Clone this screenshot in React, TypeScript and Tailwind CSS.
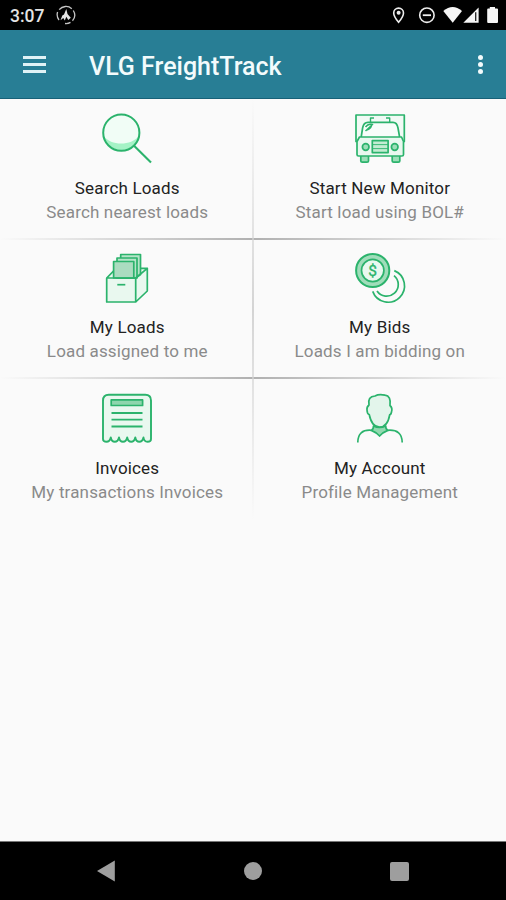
import type { ReactNode } from "react";

const GREEN = "#2bb36c";

function Icon({ children }: { children: ReactNode }) {
  return (
    <svg
      width="60"
      height="56"
      viewBox="0 0 60 56"
      fill="none"
      stroke={GREEN}
      strokeWidth="1.7"
      strokeLinejoin="round"
      className="shrink-0"
    >
      {children}
    </svg>
  );
}

const SearchIcon = () => (
  <Icon>
    <circle cx="24.3" cy="22.7" r="18.2" fill="#f1fdf6" stroke="none" />
    <path d="M6.6 26C14 36 34 36 42 26A18.2 18.2 0 0 1 6.6 26Z" fill="#a5f3c6" stroke="none" />
    <circle cx="24.3" cy="22.7" r="18.1" strokeWidth="2" />
    <path d="M37.3 35.9 54 52.5" strokeWidth="2.1" />
  </Icon>
);

const TruckIcon = () => (
  <Icon>
    <path d="M8.5 31.5H6V5H54.3V31.5H52" fill="#f1faf5" />
    <path d="M11.2 27 12.6 18Q13.6 12.3 18 12.3H43Q47 12.3 48 18L49.6 27" fill="#f8fdfa" />
    <path d="M20.5 12V8H24M36 8H39.7V12" strokeWidth="1.4" />
    <path d="M15.5 21 23 14M15.5 17Q18 13.5 21.5 14.3Q22 18 17 20" strokeWidth="1.5" />
    <path d="M10.8 46V51Q10.8 52.2 12.3 52.2H17Q18.5 52.2 18.5 51V46M42.2 46V51Q42.2 52.2 43.7 52.2H48.3Q49.8 52.2 49.8 51V46" fill="#9cdfb8" />
    <path d="M9.5 27H51.5L53.5 31.5V44.5Q53.5 46 52 46H8.5Q7 46 7 44.5V31.5Z" fill="#e9f8ef" />
    <circle cx="15.7" cy="37" r="3.3" fill="#9cdfb8" />
    <circle cx="44.7" cy="37" r="3.3" fill="#9cdfb8" />
    <rect x="22.3" y="30.6" width="15.8" height="12" fill="#c3ecd2" />
    <path d="M22.3 34.6H38M22.3 38.6H38" strokeWidth="0.9" />
  </Icon>
);

const BoxIcon = () => (
  <Icon>
    <path d="M9.7 28 17 20.3 50.3 18.3V41L38.8 52H9.7Z" fill="#e9f8ef" stroke="none" />
    <path d="M23.7 28V4.5H43.5V24.5L38.5 28Z" fill="#b5e4c8" />
    <path d="M20 28V8H40V28Z" fill="#b5e4c8" />
    <path d="M16.6 28V11.5H36.8V28Z" fill="#abdcc0" />
    <path d="M9.7 28H38.7V52H9.7ZM9.7 28 16.5 21.2M38.7 28 50.3 18.3V41L38.7 52M50.3 18.3H43.5" />
    <path d="M20.3 34.7H28.3" />
  </Icon>
);

const CoinsIcon = () => (
  <Icon>
    <path d="M44.3 20.6A16.4 16.4 0 1 1 22.7 41.4M44 25.6A11.6 11.6 0 1 1 27 41" />
    <circle cx="22.7" cy="20.5" r="16.6" fill="#a0ddba" strokeWidth="2" />
    <circle cx="22.7" cy="20.5" r="11.2" fill="#e9f8ef" />
    <text x="22.7" y="26" textAnchor="middle" fill={GREEN} strokeWidth="0.4" fontSize="15.5" className="font-[Roboto,sans-serif]">
      $
    </text>
  </Icon>
);

const InvoiceIcon = () => (
  <Icon>
    <path
      d="M6 49V10.5Q6 4.8 11.7 4.8H48.3Q54 4.8 54 10.5V49Q54 51.8 50.5 51.8Q47 51.8 46.5 47.5Q45.5 51.8 42.3 51.8Q39 51.8 38.3 47.5Q37.3 51.8 34.2 51.8Q31 51.8 30.2 47.5Q29.2 51.8 26 51.8Q22.7 51.8 22 47.5Q21 51.8 17.8 51.8Q14.5 51.8 13.8 47.5Q12.8 51.8 9.5 51.8Q6 51.8 6 49Z"
      fill="#e9f8ef"
      strokeWidth="1.9"
    />
    <rect x="14.2" y="9.9" width="31.4" height="5.6" fill="#8ed6ad" />
    <path d="M14.5 23H45.5M14.5 29.7H45.5M14.5 36.5H45.5" strokeWidth="1.8" />
  </Icon>
);

const PersonIcon = () => (
  <Icon>
    <path
      d="M19 15Q17.3 6.5 25 6Q29 3.8 35 5.2Q41.3 6 40 15.5Q42.8 18 41.5 22Q41 24.5 39.8 24.5Q37.5 37.2 29.5 37.2Q21.8 37 19.2 24.5Q17.2 24 17 20Q16.5 17 19 15Z"
      fill="#e3f5eb"
    />
    <path d="M23.5 36Q29.5 39 35.7 36Q35.7 39.5 37.8 40.4Q33 42.3 29.6 46Q26 42.3 21.4 40.4Q23.5 39.5 23.5 36Z" fill="#92d9b0" />
    <path d="M21.4 40.3Q7.8 39.2 7.8 52.5M37.8 40.3Q52.2 39.2 52.2 52.5" />
  </Icon>
);

type CellProps = { icon: ReactNode; title: string; subtitle: string; gap?: string };

function Cell({ icon, title, subtitle, gap = "gap-2.5" }: CellProps) {
  return (
    <button className={`flex flex-1 flex-col items-center whitespace-nowrap text-[17px] tracking-[0.16px] ${gap}`}>
      {icon}
      <span className="flex flex-col items-center leading-6">
        <span className="text-[#222]">{title}</span>
        <span className="text-[#8a8a8a]">{subtitle}</span>
      </span>
    </button>
  );
}

function Separator() {
  return <div className="h-0.5 bg-linear-to-r from-transparent via-[#b0b0b0] to-transparent" />;
}

function StatusBar() {
  return (
    <div className="flex h-[30px] items-center justify-between bg-black pl-2.5 pr-[7px]">
      <div className="flex items-center gap-3">
        <span className="pt-[3px] text-[17.5px] font-medium leading-none text-[#e4e4e4]">3:07</span>
        <svg width="20" height="20" viewBox="0 0 20 20" fill="none" stroke="#c4c4c4" strokeWidth="1.3">
          <path d="M3 15A8.7 8.7 0 0 1 1.6 7M3.2 4.7A8.7 8.7 0 0 1 15.8 3.7M17.3 5.5A8.7 8.7 0 0 1 16.5 15.8M14.5 17.4A8.7 8.7 0 0 1 9 18.5" />
          <path d="M4.5 15.2 6.3 10.5 8 9.5 10.3 4 11.5 9 14.8 12.8 12.3 15 10.3 11.8 8.8 15.4 7.3 13Z" fill="#e4e4e4" stroke="none" />
        </svg>
      </div>
      <svg width="108" height="20" viewBox="391 5 108 20" fill="none" stroke="#ededed" strokeWidth="1.6">
        <path d="M398.6 22.3Q393.7 16.5 393.7 13A4.9 4.9 0 0 1 403.5 13Q403.5 16.5 398.6 22.3Z" />
        <circle cx="398.6" cy="12.7" r="2" fill="#ededed" stroke="none" />
        <circle cx="426.9" cy="15.2" r="7.2" />
        <path d="M422.8 15.2H431" strokeWidth="1.8" />
        <path d="M443.3 11Q452.7 3 462 11L452.7 22.7Z" fill="#f5f5f5" stroke="none" />
        <path d="M478.6 7.5V22.7H463.3Z" fill="#f5f5f5" stroke="none" />
        <path d="M475.7 12.2V21" stroke="#222" strokeWidth="1.3" />
        <path d="M489.8 7H495V8.5H497Q498 8.5 498 9.5V22Q498 23 497 23H488.2Q487.2 23 487.2 22V9.5Q487.2 8.5 488.2 8.5H489.8Z" fill="#f5f5f5" stroke="none" />
      </svg>
    </div>
  );
}

export default function App() {
  return (
    <div className="flex h-[900px] w-[506px] flex-col overflow-hidden bg-[#fafafa] font-[Roboto,sans-serif]">
      <StatusBar />
      <header className="flex h-[69px] shrink-0 items-center border-b border-[#176178] bg-[#287e95] pl-[23px] pr-[23px]">
        <div className="flex w-[23px] flex-col gap-1 pt-px">
          <i className="h-[3px] bg-[#e0f2f6]" />
          <i className="h-[3px] bg-[#e0f2f6]" />
          <i className="h-[3px] bg-[#e0f2f6]" />
        </div>
        <h1 className="ml-[43px] flex-1 pt-1 text-[25px] font-medium leading-none text-[#f3fbfc]">
          VLG FreightTrack
        </h1>
        <div className="flex flex-col gap-0.5 pt-px">
          <i className="size-[5px] rounded-full bg-[#f3fbfc]" />
          <i className="size-[5px] rounded-full bg-[#f3fbfc]" />
          <i className="size-[5px] rounded-full bg-[#f3fbfc]" />
        </div>
      </header>
      <main className="relative flex h-[421px] shrink-0 flex-col">
        <div className="flex h-[139px] items-start pl-px pt-[11px]">
          <Cell icon={<SearchIcon />} title="Search Loads" subtitle="Search nearest loads" />
          <Cell icon={<TruckIcon />} title="Start New Monitor" subtitle="Start load using BOL#" />
        </div>
        <Separator />
        <div className="flex h-[137px] items-start pl-px pt-2.5">
          <Cell icon={<BoxIcon />} title="My Loads" subtitle="Load assigned to me" gap="gap-[9px]" />
          <Cell icon={<CoinsIcon />} title="My Bids" subtitle="Loads I am bidding on" gap="gap-[9px]" />
        </div>
        <Separator />
        <div className="flex flex-1 items-start pl-px pt-[11px]">
          <Cell icon={<InvoiceIcon />} title="Invoices" subtitle="My transactions Invoices" />
          <Cell icon={<PersonIcon />} title="My Account" subtitle="Profile Management" />
        </div>
        <div className="absolute inset-y-0 left-[252px] w-0.5 bg-linear-to-b from-transparent via-[#d4d4d4] to-transparent" />
      </main>
      <div className="flex-1" />
      <nav className="flex h-[59px] shrink-0 items-center justify-between border-t border-[#777] bg-black pl-[97px] pr-[97px]">
        <svg width="18" height="22" viewBox="0 0 18 22" fill="#9e9e9e">
          <path d="M0 11 17.8 .5V21.5Z" />
        </svg>
        <div className="size-[18px] rounded-full bg-[#9e9e9e]" />
        <div className="size-[19px] rounded-xs bg-[#9e9e9e]" />
      </nav>
    </div>
  );
}
